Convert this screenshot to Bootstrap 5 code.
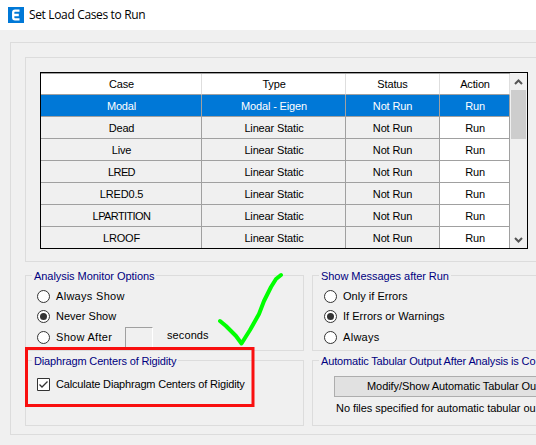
<!DOCTYPE html>
<html lang="en">
<head>
<meta charset="utf-8">
<title>Set Load Cases to Run</title>
<link href="https://cdn.jsdelivr.net/npm/bootstrap@5.3.0/dist/css/bootstrap.min.css" rel="stylesheet">
<style>
body{width:536px;height:445px;overflow:hidden;background:#f0f0f0;color:#000;font:11px/14px "Liberation Sans",Arial,sans-serif;letter-spacing:-.15px}
.titlebar{height:30px;padding-left:8px;gap:5px;font:12px/16px "Open Sans","Noto Sans",sans-serif;letter-spacing:-.35px}
.outer{margin:12px 0 0 10px;width:526px;height:393px;border:1px solid #dcdcdc;border-right:0;padding:14px 0 0 14px}
.frame{height:205px;border:1px solid #dcdcdc;border-right:0;padding:14px 0 0 14px}
.gridbox{width:488px;height:177px;border:1px solid #000}
.cases{width:469px;table-layout:fixed;border-collapse:separate;border-spacing:0;color:#000;border-top:1px solid #a0a0a0}
.cases th,.cases td{height:22px;padding:1px 0 0 1px!important;text-align:center;font-weight:400;border:0;border-right:1px solid #a0a0a0;border-bottom:1px solid #a0a0a0;line-height:14px;background:#f0f0f0;box-shadow:none;vertical-align:middle}
.cases th{height:21px;padding-top:0!important;background:#fff;border-right-color:#dedede}
.cases td:nth-child(3),.cases th:nth-child(3){padding-right:1px!important}
.cases td:last-child{background:#fff}
.cases tr.sel td{background:#0078d7;color:#fff}
.cases tbody tr:last-child td{border-bottom:0;height:21px}
.tight{letter-spacing:-.6px}
.scroll{width:17px;background:#f0f0f0}
.thumb{width:15px;height:49px;background:#cdcdcd}
.groups{display:grid;grid-template-columns:279px 224px;column-gap:8px;row-gap:9px;margin-top:13px;grid-template-rows:76px 66px}
.group{border:1px solid #dcdcdc;min-width:0}
.group:nth-child(even){border-right:0}
.group-title{width:max-content;height:14px;margin:-8px 0 0 6px;padding:1px 2px 0;line-height:14px;background:#f0f0f0;color:#000080;white-space:nowrap;letter-spacing:-.05px}
.group-title.compact{letter-spacing:-.15px}
.choice{height:14px;gap:6px;margin:6px 0 0 11px;white-space:nowrap;letter-spacing:.02px}
.choice.first{margin-top:7px}
.choice.last{margin-top:7px}
.choice.check{margin-top:10px;letter-spacing:-.18px}
.choice svg{flex:none}
.loose{letter-spacing:.3px}
.after-label{width:63px}
.secs{width:28px;height:21px;border:1px solid;border-color:#a0a0a0 #fff #fff #a0a0a0}
.secs-label{letter-spacing:.1px}
.wide-btn{width:202px;height:21px;margin:9px 0 0 21px;padding:0 0 0 32px;background:#e1e1e1;border:1px solid #adadad;border-right:0;border-radius:0;text-align:left;font-size:inherit;line-height:19px;color:#000;white-space:nowrap;letter-spacing:-.06px}
.files-note{margin:4px 0 0 23px;letter-spacing:-.05px}
.marks{left:0;top:0;pointer-events:none}
</style>
<script src="https://cdn.jsdelivr.net/npm/bootstrap@5.3.0/dist/js/bootstrap.bundle.min.js"></script>
</head>
<body class="position-relative">
<header class="titlebar d-flex align-items-center bg-white">
  <svg width="16" height="16"><path fill="#0078d7" d="M0 0h16v16H0z"/><path d="M11.500 3.700H7Q5.200 3.700 5.200 5.500V10.500Q5.200 12.300 7 12.300H11.500M5 8H10.800" fill="none" stroke="#fff" stroke-width="2.300"/></svg>
  <span>Set Load Cases to Run</span>
</header>
<main class="outer">
  <section class="frame">
    <div class="gridbox d-flex">
      <table class="cases table mb-0">
        <colgroup><col style="width:161px"><col style="width:144px"><col style="width:94px"><col style="width:70px"></colgroup>
        <thead><tr><th>Case</th><th>Type</th><th>Status</th><th>Action</th></tr></thead>
        <tbody>
        <tr class="sel"><td>Modal</td><td>Modal - Eigen</td><td>Not Run</td><td>Run</td></tr>
        <tr><td>Dead</td><td>Linear Static</td><td>Not Run</td><td>Run</td></tr>
        <tr><td>Live</td><td>Linear Static</td><td>Not Run</td><td>Run</td></tr>
        <tr><td class="tight">LRED</td><td>Linear Static</td><td>Not Run</td><td>Run</td></tr>
        <tr><td>LRED0.5</td><td>Linear Static</td><td>Not Run</td><td>Run</td></tr>
        <tr><td class="tight">LPARTITION</td><td>Linear Static</td><td>Not Run</td><td>Run</td></tr>
        <tr><td>LROOF</td><td>Linear Static</td><td>Not Run</td><td>Run</td></tr>
        </tbody>
      </table>
      <div class="scroll d-flex flex-column align-items-center">
        <svg width="17" height="17"><path d="M5 11L8.500 7.500L12 11" fill="none" stroke="#555" stroke-width="2"/></svg>
        <div class="thumb"></div>
        <svg class="mt-auto" width="17" height="17"><path d="M5 7L8.500 10.500L12 7" fill="none" stroke="#555" stroke-width="2"/></svg>
      </div>
    </div>
  </section>
  <div class="groups">
    <section class="group">
      <div class="group-title">Analysis Monitor Options</div>
      <div class="choice first d-flex align-items-center"><svg width="13" height="13"><circle cx="6.500" cy="6.500" r="6" fill="#fff" stroke="#333"/></svg><span class="loose">Always Show</span></div>
      <div class="choice d-flex align-items-center"><svg width="13" height="13"><circle cx="6.500" cy="6.500" r="6" fill="#fff" stroke="#333"/><circle cx="6.500" cy="6.500" r="3.500" fill="#333"/></svg><span>Never Show</span></div>
      <div class="choice last d-flex align-items-center"><svg width="13" height="13"><circle cx="6.500" cy="6.500" r="6" fill="#fff" stroke="#333"/></svg><span class="after-label loose">Show After</span><span class="secs"></span><span class="secs-label ms-2 pb-1">seconds</span></div>
    </section>
    <section class="group">
      <div class="group-title">Show Messages after Run</div>
      <div class="choice first d-flex align-items-center"><svg width="13" height="13"><circle cx="6.500" cy="6.500" r="6" fill="#fff" stroke="#333"/></svg><span>Only if Errors</span></div>
      <div class="choice d-flex align-items-center"><svg width="13" height="13"><circle cx="6.500" cy="6.500" r="6" fill="#fff" stroke="#333"/><circle cx="6.500" cy="6.500" r="3.500" fill="#333"/></svg><span>If Errors or Warnings</span></div>
      <div class="choice last d-flex align-items-center"><svg width="13" height="13"><circle cx="6.500" cy="6.500" r="6" fill="#fff" stroke="#333"/></svg><span class="loose">Always</span></div>
    </section>
    <section class="group">
      <div class="group-title compact">Diaphragm Centers of Rigidity</div>
      <div class="choice check d-flex align-items-center"><svg width="13" height="13"><path d="M.5.5h12v12H.5z" fill="#fff" stroke="#333"/><path d="M2.500 6.500L5 9L10.500 3.500" fill="none" stroke="#333" stroke-width="1.300"/></svg><span>Calculate Diaphragm Centers of Rigidity</span></div>
    </section>
    <section class="group">
      <div class="group-title compact">Automatic Tabular Output After Analysis is Co</div>
      <button class="btn wide-btn d-block" type="button">Modify/Show Automatic Tabular Ou</button>
      <div class="files-note text-nowrap">No files specified for automatic tabular ou</div>
    </section>
  </div>
</main>
<svg class="marks position-absolute" width="536" height="445">
  <path d="M26.500 348.500H253V405.500H26.500Z" fill="none" stroke="#f90f0f" stroke-width="3"/>
  <path d="M220 321L226 326L236 336L241.500 343.500L250 330L259 314L264 301L271 287L276 279L281 275" fill="none" stroke="#0f0" stroke-width="4" stroke-linecap="round" stroke-linejoin="round"/>
</svg>
</body>
</html>
